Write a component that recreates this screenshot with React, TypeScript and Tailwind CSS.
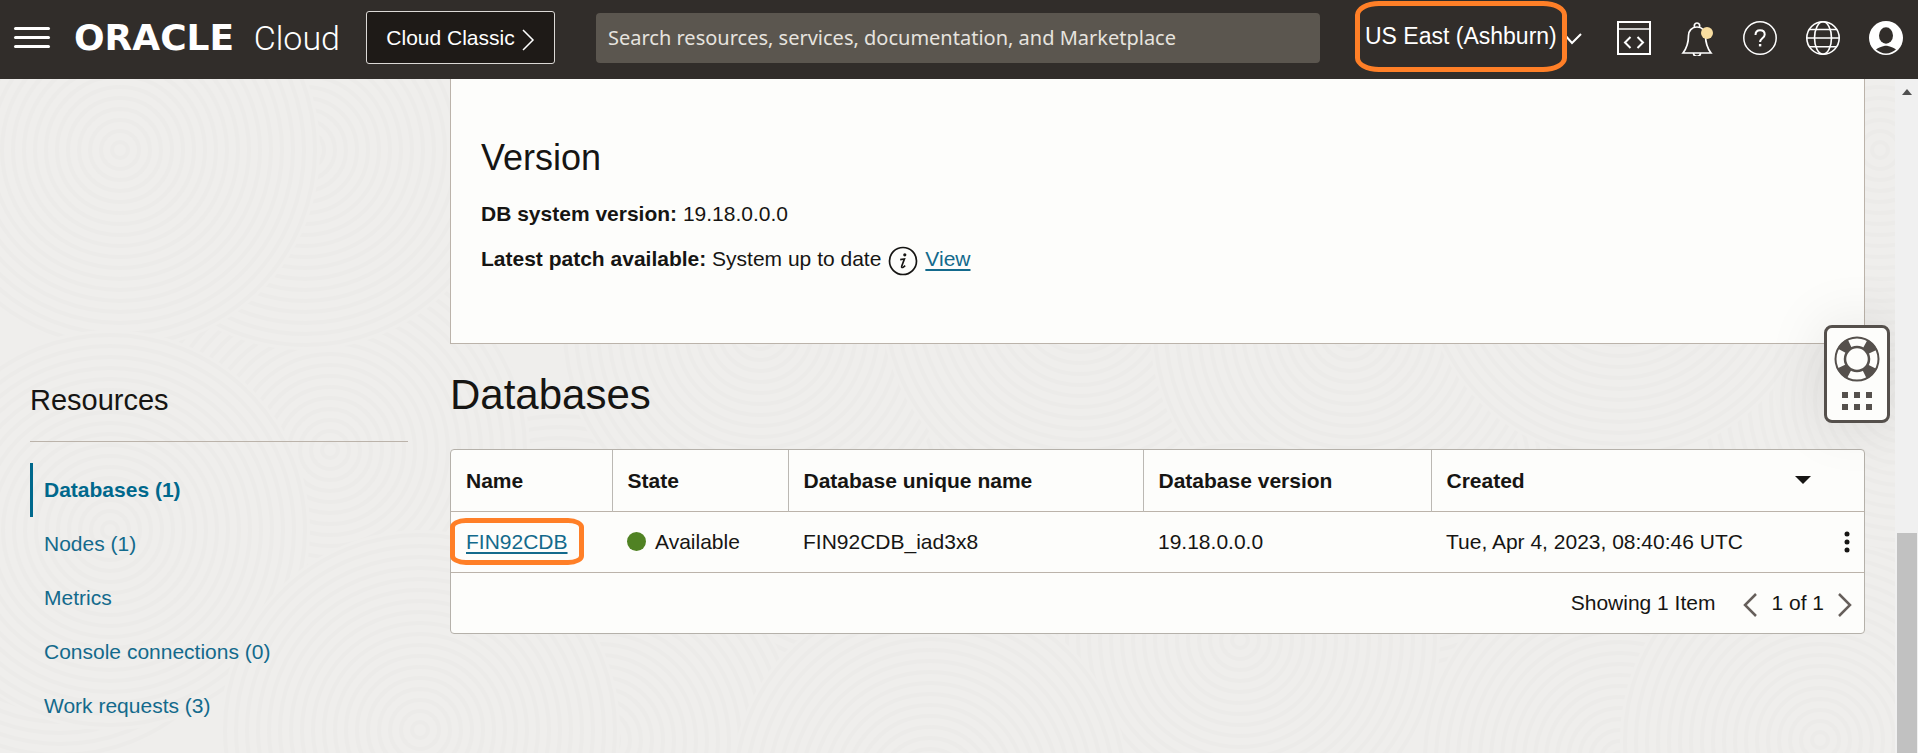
import React from "react";

const RINGS = Array.from({ length: 18 }, (_, i) => 8 + i * 11);

const DISCS: [number, number][] = [
  [60, 560], [560, 600], [860, 470], [1400, 470], [1900, 400], [330, 450],
  [760, 330], [1080, 300], [1350, 330], [1620, 260], [305, 150], [1880, 150],
  [600, 740], [1240, 640], [1620, 760], [930, 790],
  [120, 150], [110, 530], [420, 730], [1820, 740],
];

function Backdrop() {
  return (
    <svg className="pointer-events-none absolute inset-0 h-full w-full" aria-hidden="true">
      {DISCS.map(([x, y]) => (
        <g key={`${x}-${y}`} transform={`translate(${x} ${y - 79})`}>
          <circle r="200" fill="#efeeec" />
          {RINGS.map((r) => (
            <circle key={r} r={r} fill="none" stroke="#ecebe9" strokeWidth="4" />
          ))}
        </g>
      ))}
    </svg>
  );
}

function ConsoleIcon() {
  return (
    <svg viewBox="0 0 36 36" className="size-9" fill="none" stroke="#fff" strokeWidth="2" aria-hidden="true">
      <path d="M2 2h32v32H2z" />
      <path d="M2 9h32" strokeWidth="1.5" />
      <path d="M14.500 17L9 22.500l5.500 5.500M21.500 17l5.500 5.500-5.500 5.500" />
    </svg>
  );
}

function BellIcon() {
  return (
    <svg viewBox="0 0 36 36" className="size-9" fill="none" stroke="#fff" strokeWidth="1.7" aria-hidden="true">
      <path d="M15.500 7.300C15 5 15.500 3 18 3s3 2 2.500 4.300" />
      <path d="M18 7c-5.500 0-8.500 4-8.500 8.500 0 7.500-1.300 12-5.500 17.500h28c-4.200-5.500-5.500-10-5.500-17.500C26.500 11 23.500 7 18 7z" />
      <path d="M14.500 33c0 2.200 1.400 3.300 3.500 3.300s3.500-1.100 3.500-3.300" />
      <circle cx="28" cy="13" r="6" fill="#f8dda0" stroke="none" />
    </svg>
  );
}

function HelpIcon() {
  return (
    <svg viewBox="0 0 36 36" className="size-9" fill="none" stroke="#fff" aria-hidden="true">
      <circle cx="18" cy="18" r="16.2" strokeWidth="1.5" />
      <path d="M13.500 15c0-3 1.800-4.800 4.600-4.800s4.600 1.700 4.600 4.200c0 3.900-4.600 3.800-4.600 7.600" strokeWidth="2" />
      <path d="M16.900 24h2.400v2.400h-2.400z" fill="#fff" stroke="none" />
    </svg>
  );
}

function GlobeIcon() {
  return (
    <svg viewBox="0 0 36 36" className="size-9" fill="none" stroke="#fff" strokeWidth="1.6" aria-hidden="true">
      <circle cx="18" cy="18" r="16.200" />
      <ellipse cx="18" cy="18" rx="8.500" ry="16.200" />
      <path d="M2 18h32M4.500 9.500h27M4.500 26.800h27" />
    </svg>
  );
}

function UserIcon() {
  return (
    <svg viewBox="0 0 36 36" className="size-9" aria-hidden="true">
      <circle cx="18" cy="18" r="17" fill="#fff" />
      <ellipse cx="18" cy="15.500" rx="7" ry="8.300" fill="#312d2a" />
      <path d="M8 29.600c2.600-1.800 4.500-2.300 6.200-3 1.300-.5 2.300-.9 3.800-.9s2.500.4 3.800.9c1.700.7 3.600 1.200 6.200 3C25.200 32 21.900 33.500 18 33.500S10.800 32 8 29.600z" fill="#312d2a" />
    </svg>
  );
}

function LifebuoyIcon() {
  return (
    <svg viewBox="0 0 46 46" className="size-[46px]" aria-hidden="true">
      <circle cx="23" cy="23" r="17" fill="none" stroke="#55504c" strokeWidth="10" strokeDasharray="10.700 16" strokeDashoffset="-8" />
      <circle cx="23" cy="23" r="21.500" fill="none" stroke="#55504c" strokeWidth="2" />
      <circle cx="23" cy="23" r="12" fill="#fdfdfb" stroke="#55504c" strokeWidth="2.500" />
    </svg>
  );
}

function Header() {
  return (
    <header className="relative z-10 flex h-[79px] shrink-0 items-center bg-[#312d2a] pr-[14px] pb-1 pl-[14px] text-white">
      <button aria-label="Navigation menu" className="flex w-9 shrink-0 flex-col gap-1.5">
        <span className="h-[3px] rounded-sm bg-white" />
        <span className="h-[3px] rounded-sm bg-white" />
        <span className="h-[3px] rounded-sm bg-white" />
      </button>
      <a href="#home" className="ml-6 flex w-[266px] shrink-0 items-baseline justify-between leading-none">
        <span className="font-['DejaVu_Sans'] text-[36px] font-bold">ORACLE</span>
        <span className="font-[Roboto] text-[34px] font-light">Cloud</span>
      </a>
      <button className="ml-[26px] flex h-[53px] w-[189px] shrink-0 items-center justify-center gap-1.5 rounded-[3px] border border-[#dcd9d6] bg-[#1e1a17] text-[21px]">
        Cloud Classic
        <svg viewBox="0 0 14 24" className="mt-1 h-6 w-3.5" fill="none" stroke="#fff" strokeWidth="1.500" aria-hidden="true">
          <path d="M2 2l10 10L2 22" />
        </svg>
      </button>
      <input
        aria-label="Search"
        placeholder="Search resources, services, documentation, and Marketplace"
        className="ml-[41px] h-[50px] min-w-0 flex-1 rounded-[4px] bg-[#5b564f] px-3 font-['Noto_Sans'] text-xl placeholder:text-[#e6e3df]"
      />
      <div className="relative ml-[45px] shrink-0">
        <button className="flex w-[218px] items-center justify-between pb-1 text-[23px] leading-8">
          US East (Ashburn)
          <svg viewBox="0 0 20 14" className="mt-1.5 h-3.5 w-5" fill="none" stroke="#fff" strokeWidth="2" aria-hidden="true">
            <path d="M1 2l8 9 9-9" />
          </svg>
        </button>
        <span className="pointer-events-none absolute -top-[19px] -left-[10px] h-[71px] w-[212px] rounded-[24px/14px] border-[5px] border-[#ff7f27]" />
      </div>
      <nav aria-label="Tools" className="ml-[33px] flex shrink-0 gap-[27px]">
        <button aria-label="Developer tools"><ConsoleIcon /></button>
        <button aria-label="Announcements"><BellIcon /></button>
        <button aria-label="Help"><HelpIcon /></button>
        <button aria-label="Language"><GlobeIcon /></button>
        <button aria-label="Profile"><UserIcon /></button>
      </nav>
    </header>
  );
}

const RESOURCES = ["Databases (1)", "Nodes (1)", "Metrics", "Console connections (0)", "Work requests (3)"];

function Sidebar() {
  return (
    <aside className="w-[378px] shrink-0 pt-[303px]">
      <h2 className="border-b border-[#bbb3aa] pb-[23px] text-[29px] leading-9">Resources</h2>
      <ul className="mt-[21px]">
        {RESOURCES.map((label, i) => (
          <li key={label}>
            <a
              href="#resources"
              className={
                i === 0
                  ? "block border-l-[3px] border-[#00688c] pl-[11px] leading-[54px] font-bold text-[#00688c]"
                  : "block border-l-[3px] border-transparent pl-[11px] leading-[54px] text-[#136a8c]"
              }
            >
              {label}
            </a>
          </li>
        ))}
      </ul>
    </aside>
  );
}

function VersionCard() {
  return (
    <section className="border border-t-0 border-[#bbb3aa] bg-[#fdfdfb] px-[30px] pt-[59px] pb-[62px]">
      <h2 className="mb-[13px] text-[36px] leading-10">Version</h2>
      <p className="leading-[45px]">
        <b>DB system version:</b> 19.18.0.0.0
      </p>
      <p className="flex items-center gap-[7px] leading-[45px]">
        <span><b>Latest patch available:</b> System up to date</span>
        <svg viewBox="0 0 30 30" className="mt-1 size-[30px]" aria-hidden="true">
          <circle cx="15" cy="15" r="13.500" fill="none" stroke="#161513" strokeWidth="1.700" />
          <circle cx="16.800" cy="8.800" r="1.600" fill="#161513" />
          <path d="M12.200 13.600l4.200-.6-2.700 7.200c-.4 1.300.6 1.600 1.700.9l1.800-1.500" fill="none" stroke="#161513" strokeWidth="1.700" />
        </svg>
        <a href="#view" className="text-[#136a8c] underline decoration-2 underline-offset-[3px]">View</a>
      </p>
    </section>
  );
}

function DatabasesTable() {
  return (
    <section>
      <h1 className="mt-[27px] mb-[30px] text-[42px] leading-[48px]">Databases</h1>
      <div className="rounded-[4px] border border-[#b5b1aa] bg-[#fdfdfb]">
        <table className="w-full table-fixed border-collapse text-left">
          <colgroup>
            <col className="w-[161px]" />
            <col className="w-[176px]" />
            <col className="w-[355px]" />
            <col className="w-[288px]" />
            <col />
          </colgroup>
          <thead>
            <tr className="h-[61px] border-b border-[#bbb3aa]">
              <th className="border-r border-[#bbb8b3] pl-[15px]">Name</th>
              <th className="border-r border-[#bbb8b3] pl-[15px]">State</th>
              <th className="border-r border-[#bbb8b3] pl-[15px]">Database unique name</th>
              <th className="border-r border-[#bbb8b3] pl-[15px]">Database version</th>
              <th className="pr-[53px] pl-[15px]">
                <button className="flex w-full items-center justify-between font-bold">
                  Created
                  <svg viewBox="0 0 16 8" className="h-2 w-4" fill="#161513" aria-hidden="true">
                    <path d="M0 0h16L8 8z" />
                  </svg>
                </button>
              </th>
            </tr>
          </thead>
          <tbody>
            <tr className="h-[61px] border-b border-[#bbb3aa]">
              <td className="pl-[15px]">
                <span className="relative">
                  <a href="#FIN92CDB" className="text-[#136a8c] underline decoration-2 underline-offset-[3px]">FIN92CDB</a>
                  <span className="pointer-events-none absolute -inset-x-4 -top-3 -bottom-3 rounded-[16px/9px] border-[5px] border-[#ff7f27]" />
                </span>
              </td>
              <td className="pl-[15px]">
                <span className="flex items-center gap-[9px]">
                  <span className="size-[19px] rounded-full bg-[#508223]" />
                  Available
                </span>
              </td>
              <td className="pl-[15px]">FIN92CDB_iad3x8</td>
              <td className="pl-[15px]">19.18.0.0.0</td>
              <td className="pr-[14px] pl-[15px]">
                <span className="flex items-center justify-between">
                  Tue, Apr 4, 2023, 08:40:46 UTC
                  <button aria-label="Actions">
                    <svg viewBox="0 0 6 22" className="h-[22px] w-1.5" fill="#161513" aria-hidden="true">
                      <circle cx="3" cy="3" r="2.500" />
                      <circle cx="3" cy="11" r="2.500" />
                      <circle cx="3" cy="19" r="2.500" />
                    </svg>
                  </button>
                </span>
              </td>
            </tr>
          </tbody>
        </table>
        <div className="flex h-[60px] items-center justify-end pr-[11px]">
          <span className="mr-[27px]">Showing 1 Item</span>
          <button aria-label="Previous page">
            <svg viewBox="0 0 16 24" className="mt-1 h-6 w-4" fill="none" stroke="#665f5b" strokeWidth="2.500" aria-hidden="true">
              <path d="M14 1L3 12l11 11" />
            </svg>
          </button>
          <span className="mx-[13px]">1 of 1</span>
          <button aria-label="Next page">
            <svg viewBox="0 0 16 24" className="mt-1 h-6 w-4" fill="none" stroke="#665f5b" strokeWidth="2.500" aria-hidden="true">
              <path d="M2 1l11 11L2 23" />
            </svg>
          </button>
        </div>
      </div>
    </section>
  );
}

function SupportWidget() {
  return (
    <button
      aria-label="Support"
      className="absolute top-[246px] right-[5px] flex h-[98px] w-[66px] flex-col items-center gap-[10px] rounded-lg border-[3px] border-[#55504c] bg-[#fdfdfb] pt-[8px] shadow-[0_0_60px_rgba(0,0,0,0.1)]"
    >
      <LifebuoyIcon />
      <span className="grid grid-cols-3 gap-1.5">
        {[0, 1, 2, 3, 4, 5].map((n) => (
          <span key={n} className="size-1.5 bg-[#55504c]" />
        ))}
      </span>
    </button>
  );
}

export default function App() {
  return (
    <div className="flex min-h-screen flex-col bg-[#efeeec] font-['Liberation_Sans',Arial,sans-serif] text-[21px] text-[#161513]">
      <Header />
      <div className="flex flex-1">
        <div className="relative min-w-0 flex-1 overflow-hidden">
          <Backdrop />
          <div className="relative flex gap-[42px] pr-[30px] pl-[30px]">
            <Sidebar />
            <main className="min-w-0 flex-1">
              <VersionCard />
              <DatabasesTable />
            </main>
          </div>
          <SupportWidget />
        </div>
        <div className="flex w-[23px] shrink-0 flex-col items-center bg-[#f0f0f0] pt-[10px]">
          <svg viewBox="0 0 10 6" className="h-1.5 w-2.5" fill="#505050" aria-hidden="true">
            <path d="M0 6l5-6 5 6z" />
          </svg>
          <span className="mt-[438px] w-5 flex-1 bg-[#c1c1c1]" />
        </div>
      </div>
    </div>
  );
}
